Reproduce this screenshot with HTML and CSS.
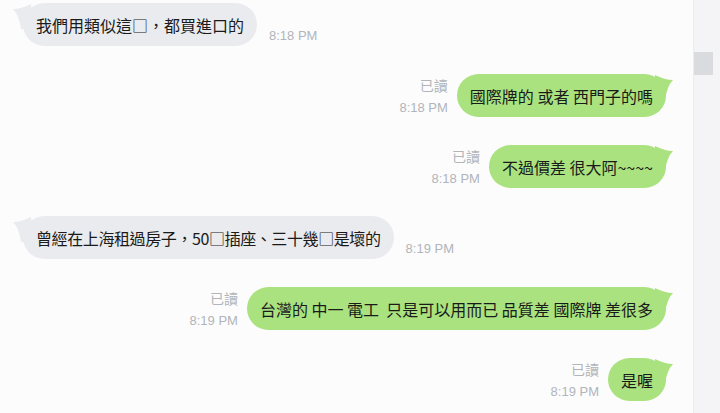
FILE: index.html
```html
<!DOCTYPE html>
<html lang="zh-Hant">
<head>
  <meta name="viewport" content="width=device-width, initial-scale=1">
  <link rel="stylesheet" href="styles.css">
</head>
<body>
  <div class="chat-window">
    <div class="chat-log">

      <div class="row in">
        <div class="bubble">
          <svg class="tail" width="20" height="26" viewBox="0 0 20 26"><path d="M18 1 Q8 6 0 6 Q6 12 8 26 L20 26 Z"/></svg>
          <span class="msg">我們用類似這□，都買進口的</span>
        </div>
        <span class="time">8:18 PM</span>
      </div>

      <div class="row out">
        <div class="meta"><span class="read">已讀</span><span class="time">8:18 PM</span></div>
        <div class="bubble">
          <svg class="tail" width="20" height="26" viewBox="0 0 20 26"><path d="M2 1 Q12 6 20 6 Q14 12 12 26 L0 26 Z"/></svg>
          <span class="msg">國際牌的 或者 西門子的嗎</span>
        </div>
      </div>

      <div class="row out">
        <div class="meta"><span class="read">已讀</span><span class="time">8:18 PM</span></div>
        <div class="bubble">
          <svg class="tail" width="20" height="26" viewBox="0 0 20 26"><path d="M2 1 Q12 6 20 6 Q14 12 12 26 L0 26 Z"/></svg>
          <span class="msg">不過價差 很大阿~~~~</span>
        </div>
      </div>

      <div class="row in">
        <div class="bubble">
          <svg class="tail" width="20" height="26" viewBox="0 0 20 26"><path d="M18 1 Q8 6 0 6 Q6 12 8 26 L20 26 Z"/></svg>
          <span class="msg narrow">曾經在上海租過房子，50□插座、三十幾□是壞的</span>
        </div>
        <span class="time">8:19 PM</span>
      </div>

      <div class="row out">
        <div class="meta"><span class="read">已讀</span><span class="time">8:19 PM</span></div>
        <div class="bubble">
          <svg class="tail" width="20" height="26" viewBox="0 0 20 26"><path d="M2 1 Q12 6 20 6 Q14 12 12 26 L0 26 Z"/></svg>
          <span class="msg">台灣的 中一 電工&nbsp; 只是可以用而已 品質差 國際牌 差很多</span>
        </div>
      </div>

      <div class="row out">
        <div class="meta"><span class="read">已讀</span><span class="time">8:19 PM</span></div>
        <div class="bubble">
          <svg class="tail" width="20" height="26" viewBox="0 0 20 26"><path d="M2 1 Q12 6 20 6 Q14 12 12 26 L0 26 Z"/></svg>
          <span class="msg">是喔</span>
        </div>
      </div>

    </div>

    <div class="scrollbar">
      <div class="thumb"></div>
    </div>
  </div>
</body>
</html>
```

FILE: styles.css
```css
:root {
  --page-bg: #fcfcfc;
  --in-bg: #e9ebee;
  --out-bg: #a9e27f;
  --text: #1a1a1a;
  --muted: #b1b5bb;
  --track: #f4f4f6;
  --thumb: #d9dbdf;
}

* {
  box-sizing: border-box;
}

body {
  margin: 0;
  background: var(--page-bg);
  font-family: "Noto Sans CJK TC", "Noto Sans", sans-serif;
}

.chat-window {
  display: flex;
  width: 720px;
  height: 413px;
  overflow: hidden;
}

.chat-log {
  flex: 1;
  display: flex;
  flex-direction: column;
  gap: 28px;
  padding-top: 3px;
}

.row {
  display: flex;
  align-items: flex-end;
}

.row.in {
  padding-left: 23px;
}

.row.out {
  justify-content: flex-end;
  padding-right: 27px;
}

.bubble {
  position: relative;
  height: 43px;
  padding: 0 13px;
  border-radius: 22px;
  display: flex;
  align-items: center;
}

.row.in .bubble {
  background: var(--in-bg);
}

.row.out .bubble {
  background: var(--out-bg);
}

.msg {
  position: relative;
  font-size: 16px;
  color: var(--text);
  white-space: nowrap;
  line-height: 1;
}

.msg.narrow {
  letter-spacing: -0.4px;
}

.tail {
  position: absolute;
  top: 0;
}

.row.in .tail {
  left: -10px;
  fill: var(--in-bg);
}

.row.out .tail {
  right: -7px;
  fill: var(--out-bg);
}

.time {
  font-family: "Liberation Sans", sans-serif;
  font-size: 13px;
  color: var(--muted);
  white-space: nowrap;
}

.row.in > .time {
  margin-left: 12px;
  margin-bottom: 3px;
}

.meta {
  display: flex;
  flex-direction: column;
  align-items: flex-end;
  gap: 8px;
  margin-right: 9px;
  margin-bottom: 1px;
}

.read {
  font-size: 14px;
  line-height: 1;
  color: var(--muted);
}

.meta .time {
  line-height: 1.2;
}

.scrollbar {
  width: 27px;
  background: var(--track);
  border-left: 1px solid #ececef;
}

.thumb {
  margin-top: 52px;
  width: 19px;
  height: 23px;
  background: var(--thumb);
}
```
